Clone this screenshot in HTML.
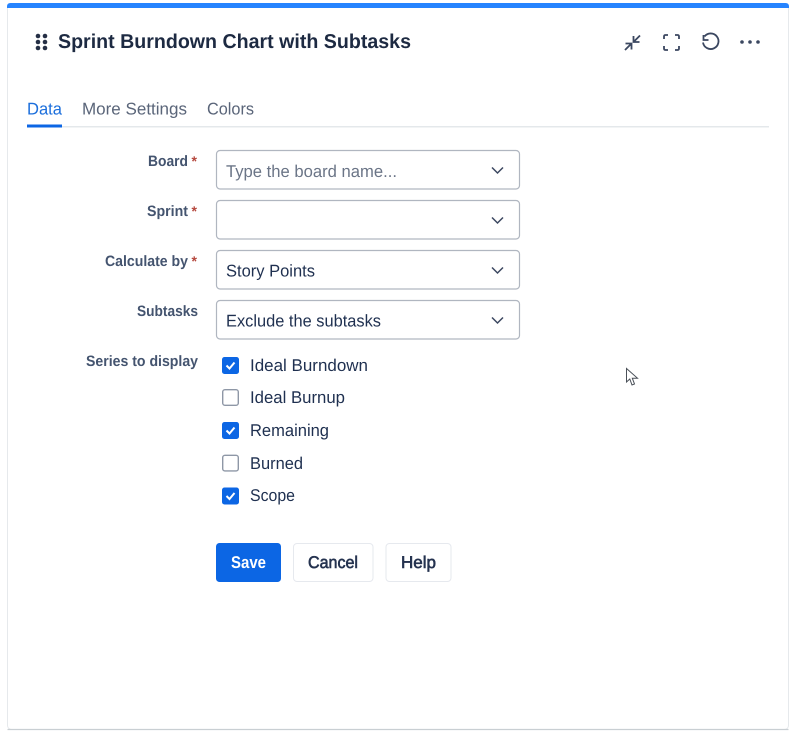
<!DOCTYPE html>
<html lang="en">
<head>
<meta charset="utf-8">
<title>Sprint Burndown Chart with Subtasks</title>
<style>
html,body{margin:0;padding:0;background:#fff;width:794px;height:734px;overflow:hidden}
svg{display:block;font-family:"Liberation Sans",Arial,sans-serif}
text{text-rendering:geometricPrecision}
.lab{font-size:15px;font-weight:700;fill:#44546f}
.star{font-size:14px;font-weight:700;fill:#b5493f}
.val{font-size:17px;fill:#1f3050}
.box{fill:#fff;stroke:#b0b6c0;stroke-width:1.2}
.chev{fill:none;stroke:#3b4760;stroke-width:1.5}
.ic{fill:none;stroke:#3b4760;stroke-width:1.8}
.chk{fill:none;stroke:#fff;stroke-width:2}
.btn{font-size:17px;fill:#24324f;stroke:#24324f;stroke-width:.6}
</style>
</head>
<body>
<svg width="794" height="734" viewBox="0 0 794 734" xmlns="http://www.w3.org/2000/svg">
<rect width="794" height="734" fill="#fff"/>
<!-- card -->
<rect x="7.500" y="4.500" width="781" height="725" rx="4" fill="#fff" stroke="#e6e9ec"/>
<path d="M7.500 729.500H788.500" stroke="#c9cfd3" stroke-width="1.200" fill="none"/>
<path d="M7 8V6.500Q7 3 10.500 3H785.500Q789 3 789 6.500V8Z" fill="#2684ff"/>
<!-- drag handle -->
<g fill="#252f45">
<circle cx="38" cy="36" r="2.300"/><circle cx="45" cy="36" r="2.300"/>
<circle cx="38" cy="42" r="2.300"/><circle cx="45" cy="42" r="2.300"/>
<circle cx="38" cy="48" r="2.300"/><circle cx="45" cy="48" r="2.300"/>
</g>
<text x="58" y="48" font-size="20" font-weight="700" fill="#1d2a42" textLength="353" lengthAdjust="spacingAndGlyphs">Sprint Burndown Chart with Subtasks</text>
<!-- header icons -->
<path class="ic" d="M625 50L631.500 43.500M625.500 43.500H631.500V49.500M640 35.500L633.500 42M633.500 36V42H639.500"/>
<path class="ic" d="M664 39V36.500Q664 35 665.500 35H668M675 35H677.500Q679 35 679 36.500V39M679 46V48.500Q679 50 677.500 50H675M668 50H665.500Q664 50 664 48.500V46"/>
<path class="ic" d="M704.500 36.500A7.800 7.800 0 1 1 703 42.500M703.500 35V40H708.500"/>
<g fill="#3b4760"><circle cx="742" cy="42" r="1.800"/><circle cx="750" cy="42" r="1.800"/><circle cx="758" cy="42" r="1.800"/></g>
<!-- tabs -->
<rect x="27" y="126" width="742" height="1.500" fill="#e4e8eb"/>
<rect x="27" y="124.500" width="35" height="3" fill="#0c66e4"/>
<text x="27" y="114.500" font-size="17" fill="#1c6fdc" textLength="35" lengthAdjust="spacingAndGlyphs">Data</text>
<text x="82" y="114.500" font-size="17" fill="#5a6579" textLength="105" lengthAdjust="spacingAndGlyphs">More Settings</text>
<text x="207" y="114.500" font-size="17" fill="#5a6579" textLength="47" lengthAdjust="spacingAndGlyphs">Colors</text>
<!-- labels -->
<text class="lab" x="148" y="166" textLength="40" lengthAdjust="spacingAndGlyphs">Board</text><text class="star" x="191.500" y="166">*</text>
<text class="lab" x="147" y="216" textLength="41" lengthAdjust="spacingAndGlyphs">Sprint</text><text class="star" x="191.500" y="216">*</text>
<text class="lab" x="105" y="266" textLength="83" lengthAdjust="spacingAndGlyphs">Calculate by</text><text class="star" x="191.500" y="266">*</text>
<text class="lab" x="137" y="316" textLength="61" lengthAdjust="spacingAndGlyphs">Subtasks</text>
<text class="lab" x="86" y="366" textLength="112" lengthAdjust="spacingAndGlyphs">Series to display</text>
<!-- selects -->
<rect class="box" x="216.500" y="150.500" width="303" height="38.500" rx="3.500"/>
<rect class="box" x="216.500" y="200.500" width="303" height="38.500" rx="3.500"/>
<rect class="box" x="216.500" y="250.500" width="303" height="38.500" rx="3.500"/>
<rect class="box" x="216.500" y="300.500" width="303" height="38.500" rx="3.500"/>
<text x="226" y="177" font-size="17" fill="#6b7587" textLength="171" lengthAdjust="spacingAndGlyphs">Type the board name...</text>
<text class="val" x="226" y="276.500" textLength="89" lengthAdjust="spacingAndGlyphs">Story Points</text>
<text class="val" x="226" y="326.500" textLength="155" lengthAdjust="spacingAndGlyphs">Exclude the subtasks</text>
<path class="chev" d="M492 167.500L497.500 173L503 167.500"/>
<path class="chev" d="M492 217.500L497.500 223L503 217.500"/>
<path class="chev" d="M492 267.500L497.500 273L503 267.500"/>
<path class="chev" d="M492 317.500L497.500 323L503 317.500"/>
<!-- checkboxes -->
<rect x="222" y="357" width="17" height="17" rx="2.500" fill="#0c66e4"/>
<path class="chk" d="M226.500 365.500L229.500 368.500L234.500 362.500"/>
<rect x="222.700" y="389.700" width="15.600" height="15.600" rx="2.200" fill="#fff" stroke="#8e97a6" stroke-width="1.400"/>
<rect x="222" y="422" width="17" height="17" rx="2.500" fill="#0c66e4"/>
<path class="chk" d="M226.500 430.500L229.500 433.500L234.500 427.500"/>
<rect x="222.700" y="455.300" width="15.600" height="15.600" rx="2.200" fill="#fff" stroke="#8e97a6" stroke-width="1.400"/>
<rect x="222" y="487.500" width="17" height="17" rx="2.500" fill="#0c66e4"/>
<path class="chk" d="M226.500 496L229.500 499L234.500 493"/>
<text class="val" x="250" y="371" textLength="118" lengthAdjust="spacingAndGlyphs">Ideal Burndown</text>
<text class="val" x="250" y="403" textLength="95" lengthAdjust="spacingAndGlyphs">Ideal Burnup</text>
<text class="val" x="250" y="436" textLength="79" lengthAdjust="spacingAndGlyphs">Remaining</text>
<text class="val" x="250" y="469" textLength="53" lengthAdjust="spacingAndGlyphs">Burned</text>
<text class="val" x="250" y="501" textLength="45" lengthAdjust="spacingAndGlyphs">Scope</text>
<!-- buttons -->
<rect x="216" y="543" width="65" height="39" rx="3.500" fill="#0c66e4"/>
<text x="231" y="568" font-size="17" font-weight="700" fill="#fff" textLength="35" lengthAdjust="spacingAndGlyphs">Save</text>
<rect x="293.500" y="543.500" width="79.500" height="38" rx="3.500" fill="#fff" stroke="#e6e9ee"/>
<text class="btn" x="308" y="568" textLength="50" lengthAdjust="spacingAndGlyphs">Cancel</text>
<rect x="386" y="543.500" width="65" height="38" rx="3.500" fill="#fff" stroke="#e6e9ee"/>
<text class="btn" x="401" y="568" textLength="35" lengthAdjust="spacingAndGlyphs">Help</text>
<!-- cursor -->
<path d="M626.500 368.500V382L629.800 379L632 385L634.500 384L632.300 378.200H637.500Z" fill="#fff" stroke="#4a5058" stroke-width="1"/>
</svg>
</body>
</html>
